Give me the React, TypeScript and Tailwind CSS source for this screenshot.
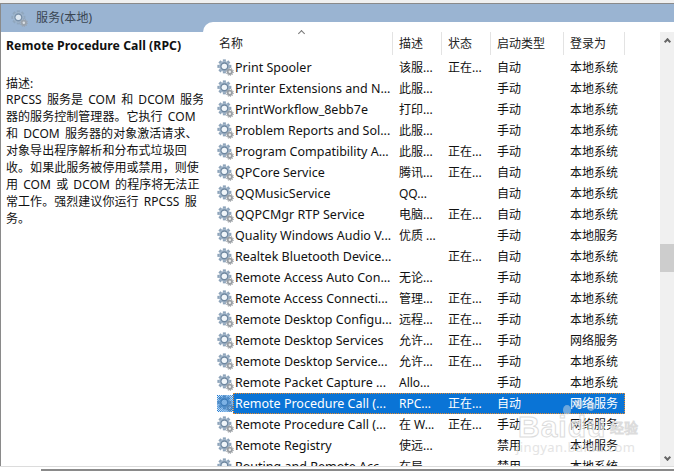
const rows: [string, string, string, string, string][] = [
  ["Print Spooler", "该服...", "正在...", "自动", "本地系统"],
  ["Printer Extensions and N...", "此服...", "", "手动", "本地系统"],
  ["PrintWorkflow_8ebb7e", "打印...", "", "手动", "本地系统"],
  ["Problem Reports and Sol...", "此服...", "", "手动", "本地系统"],
  ["Program Compatibility A...", "此服...", "正在...", "手动", "本地系统"],
  ["QPCore Service", "腾讯...", "正在...", "自动", "本地系统"],
  ["QQMusicService", "QQ...", "", "自动", "本地系统"],
  ["QQPCMgr RTP Service", "电脑...", "正在...", "自动", "本地系统"],
  ["Quality Windows Audio V...", "优质 ...", "", "手动", "本地服务"],
  ["Realtek Bluetooth Device...", "", "正在...", "自动", "本地系统"],
  ["Remote Access Auto Con...", "无论...", "", "手动", "本地系统"],
  ["Remote Access Connecti...", "管理...", "正在...", "手动", "本地系统"],
  ["Remote Desktop Configu...", "远程...", "正在...", "手动", "本地系统"],
  ["Remote Desktop Services", "允许...", "正在...", "手动", "网络服务"],
  ["Remote Desktop Service...", "允许...", "正在...", "手动", "本地系统"],
  ["Remote Packet Capture ...", "Allo...", "", "手动", "本地系统"],
  ["Remote Procedure Call (...", "RPC...", "正在...", "自动", "网络服务"],
  ["Remote Procedure Call (...", "在 W...", "正在...", "手动", "网络服务"],
  ["Remote Registry", "使远...", "", "禁用", "本地服务"],
  ["Routing and Remote Acc...", "在局...", "", "禁用", "本地系统"],
];

const font = "font-['Noto_Sans','Noto_Sans_CJK_SC',sans-serif]";

function Gear({ selected = false }: { selected?: boolean }) {
  const big = Array.from({ length: 8 }, (_, i) => i * 45);
  return (
    <svg width="17" height="17" viewBox="0 0 18 18" className="shrink-0">
      <defs>
        <pattern id="dith" width="2" height="2" patternUnits="userSpaceOnUse">
          <rect width="1" height="1" fill="#0a6fd0" />
          <rect x="1" y="1" width="1" height="1" fill="#0a6fd0" />
        </pattern>
      </defs>
      {big.map((a) => (
        <rect key={a} x="6.2" y="0.4" width="3.2" height="3" fill="#8ea4ba" transform={`rotate(${a} 7.8 7.8)`} />
      ))}
      <circle cx="7.8" cy="7.8" r="5.6" fill="#a3b7cb" />
      <circle cx="7.8" cy="7.8" r="3.6" fill="none" stroke="#6f879f" strokeWidth="1.4" />
      <circle cx="7.8" cy="7.8" r="2.8" fill="#f0f5f9" />
      <circle cx="13.6" cy="13.6" r="3.3" fill="#9a9fa4" />
      <circle cx="13.6" cy="13.6" r="3.9" fill="none" stroke="#9a9fa4" strokeWidth="1" strokeDasharray="1.2 1.2" />
      <circle cx="13.6" cy="13.6" r="1.3" fill="#ececec" />
      {selected && <rect width="18" height="18" fill="url(#dith)" />}
    </svg>
  );
}

function Row({ r }: { r: [string, string, string, string, string] }) {
  const selected = r[1] === "RPC...";
  return (
    <div className="flex h-[21px] shrink-0 items-center pl-[14px] text-[12.5px] leading-[21px] text-[#111]">
      <Gear selected={selected} />
      <div
        className={
          "ml-[-1px] flex h-[21px] w-[392px] items-center whitespace-nowrap " +
          (selected ? "border border-dotted border-[#e8892b] bg-[#0a74d6] text-white" : "border border-transparent")
        }
      >
        <span className="w-[165px] pl-[1px]">{r[0]}</span>
        <span className="w-[49px] text-[12px]">{r[1]}</span>
        <span className="w-[49px] text-[12px]">{r[2]}</span>
        <span className="w-[73px] text-[12px]">{r[3]}</span>
        <span className="text-[12px]">{r[4]}</span>
      </div>
    </div>
  );
}

function Head({ w, label, pl }: { w: string; label: string; pl: string }) {
  return (
    <div className={`${w} ${pl} h-[23px] shrink-0 border-r border-[#e3e3e3] text-[12px] leading-[23px] text-[#222]`}>
      {label}
    </div>
  );
}

function Watermark() {
  return (
    <div className="pointer-events-none absolute left-[510px] top-[398px] z-20 h-[60px] w-[140px]">
      <svg width="50" height="24" viewBox="0 0 50 24" className="absolute left-[46px] top-0">
        <g fill="#e6e6e6" fillOpacity="0.45">
          <ellipse cx="11" cy="12" rx="4" ry="5" />
          <ellipse cx="23" cy="6" rx="4" ry="5" />
          <ellipse cx="35" cy="8" rx="4" ry="5" />
        </g>
      </svg>
      <div className="absolute left-[8px] top-[13px] whitespace-nowrap font-['Liberation_Sans',sans-serif] text-[30px] font-bold leading-[32px] tracking-[1px] text-white/50 [-webkit-text-stroke:1px_#dcdcdc]">
        Baidu
      </div>
      <div className="absolute left-[100px] top-[22px] text-[14px] leading-[16px] text-white/50 [-webkit-text-stroke:1px_#dcdcdc]">
        经验
      </div>
      <div className="absolute left-[6px] top-[41px] whitespace-nowrap text-[13px] leading-[16px] tracking-[0.4px] text-[#e4e4e4]">
        jingyan.baidu.com
      </div>
    </div>
  );
}

export default function App() {
  return (
    <div className={`${font} relative flex h-[471px] w-[674px] flex-col overflow-hidden bg-white`}>
      <div className="h-[3px] shrink-0 bg-[#f0f0f0]" />
      <div className="h-[1px] shrink-0 bg-[#8a8a8a]" />
      <div className="flex h-[462px] shrink-0 flex-col border-l border-[#8a8a8a]">
        <div className="flex h-[28px] shrink-0 items-center bg-[#9ab4d2] pl-[10px]">
          <div className="opacity-80">
            <Gear />
          </div>
          <span className="ml-[8px] text-[12px] tracking-[0.2px] text-[#3a4652]">服务(本地)</span>
        </div>
        <div className="flex min-h-0 flex-1">
          <div className="w-[202px] shrink-0 bg-white pl-[5px] pt-[5px] text-[12px] leading-[17px] tracking-[0.05px] text-[#111] [word-spacing:2px]">
            <div className="whitespace-nowrap text-[12.25px] font-bold leading-[18px] [word-spacing:0px]">Remote Procedure Call (RPC)</div>
            <div className="mt-[20px] h-[16px] leading-[17px]">描述:</div>
            <div className="whitespace-pre">
              {"RPCSS 服务是 COM 和 DCOM 服务\n器的服务控制管理器。它执行 COM\n和 DCOM 服务器的对象激活请求、\n对象导出程序解析和分布式垃圾回\n收。如果此服务被停用或禁用，则使\n用 COM 或 DCOM 的程序将无法正\n常工作。强烈建议你运行 RPCSS 服\n务。"}
            </div>
          </div>
          <div className="z-10 -mt-[10px] flex min-w-0 flex-1 rounded-tl-[10px] bg-white">
            <div className="relative flex min-w-0 flex-1 flex-col overflow-hidden pt-[10px]">
              <div className="absolute left-[96px] top-[9px] h-[5px] w-[5px] rotate-45 border-l border-t border-[#777]" />
              <div className="flex shrink-0">
                <Head w="w-[190px]" pl="pl-[16px]" label="名称" />
                <Head w="w-[49px]" pl="pl-[6px]" label="描述" />
                <Head w="w-[49px]" pl="pl-[6px]" label="状态" />
                <Head w="w-[73px]" pl="pl-[6px]" label="启动类型" />
                <Head w="w-[61px]" pl="pl-[6px]" label="登录为" />
              </div>
              <div className="flex min-h-0 flex-1 flex-col overflow-hidden pt-[2px]">
                {rows.map((r, i) => (
                  <Row key={i} r={r} />
                ))}
              </div>
            </div>
            <div className="mt-[10px] flex w-[14px] shrink-0 flex-col items-center bg-[#f0f0f0]">
              <div className="mt-[5px] h-[5px] w-[5px] translate-y-[2px] rotate-45 border-l-2 border-t-2 border-[#666]" />
              <div className="mt-[202px] h-[28px] w-full bg-[#cdcdcd]" />
              <div className="mt-auto mb-[6px] h-[5px] w-[5px] rotate-45 border-b-2 border-r-2 border-[#666]" />
            </div>
          </div>
        </div>
      </div>
      <div className="h-[1px] shrink-0 bg-[#dcdcdc]" />
      <div className="h-[2px] shrink-0" />
      <div className="ml-[41px] h-[2px] shrink-0 bg-[#8a8a8a]" />
      <Watermark />
    </div>
  );
}
